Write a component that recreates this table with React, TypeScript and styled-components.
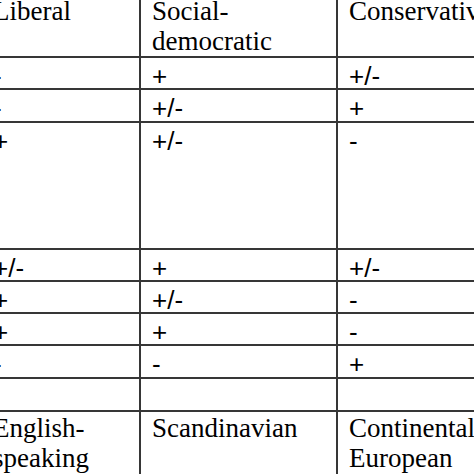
import React from "react";
import styled, { createGlobalStyle } from "styled-components";

const GlobalStyle = createGlobalStyle`
  html, body {
    margin: 0;
    padding: 0;
    background: #ffffff;
    overflow: hidden;
  }
`;

const LINE = "#363636";

const header = ["Liberal", "Social-\ndemocratic", "Conservative"];

const signRows = [
  ["-", "+", "+/-"],
  ["-", "+/-", "+"],
  ["+", "+/-", "-"],
  ["+/-", "+", "+/-"],
  ["+", "+/-", "-"],
  ["+", "+", "-"],
  ["-", "-", "+"],
  ["", "", ""],
];

const footer = ["English-\nspeaking", "Scandinavian", "Continental\nEuropean"];

const App: React.FC = () => {
  return (
    <>
      <GlobalStyle />
      <Viewport>
        <Table>
          {header.map((text, i) => (
            <Cell key={"h" + i} $kind="label">
              {text}
            </Cell>
          ))}
          {signRows.map((row, r) =>
            row.map((text, i) => (
              <Cell key={r + "-" + i} $kind="sign">
                {text}
              </Cell>
            ))
          )}
          {footer.map((text, i) => (
            <Cell key={"f" + i} $kind="label">
              {text}
            </Cell>
          ))}
        </Table>
      </Viewport>
    </>
  );
};

export default App;

const Viewport = styled.div`
  width: 474px;
  height: 474px;
  overflow: hidden;
`;

const Table = styled.div`
  display: grid;
  grid-template-columns: 160px 197px 220px;
  grid-template-rows: 63px 32px 33px 127px 32px 32px 32px 33px 33px 70px;
  margin-left: -19px;
  margin-top: -5px;
  width: 577px;
`;

const Cell = styled.div<{ $kind: "label" | "sign" }>`
  box-sizing: border-box;
  border-right: 2px solid ${LINE};
  border-bottom: 2px solid ${LINE};
  padding-left: 11px;
  color: #000000;
  white-space: pre-line;
  font-family: ${(p) =>
    p.$kind === "label"
      ? '"Liberation Serif", "Times New Roman", serif'
      : '"Liberation Sans", Arial, sans-serif'};
  font-size: ${(p) => (p.$kind === "label" ? "27px" : "26px")};
  line-height: ${(p) => (p.$kind === "label" ? "30px" : "26px")};
  padding-top: ${(p) => (p.$kind === "label" ? "1px" : "5px")};

  &:nth-child(3n + 1) {
    padding-left: 12px;
  }
  &:nth-last-child(-n + 3) {
    border-bottom: none;
  }
`;
